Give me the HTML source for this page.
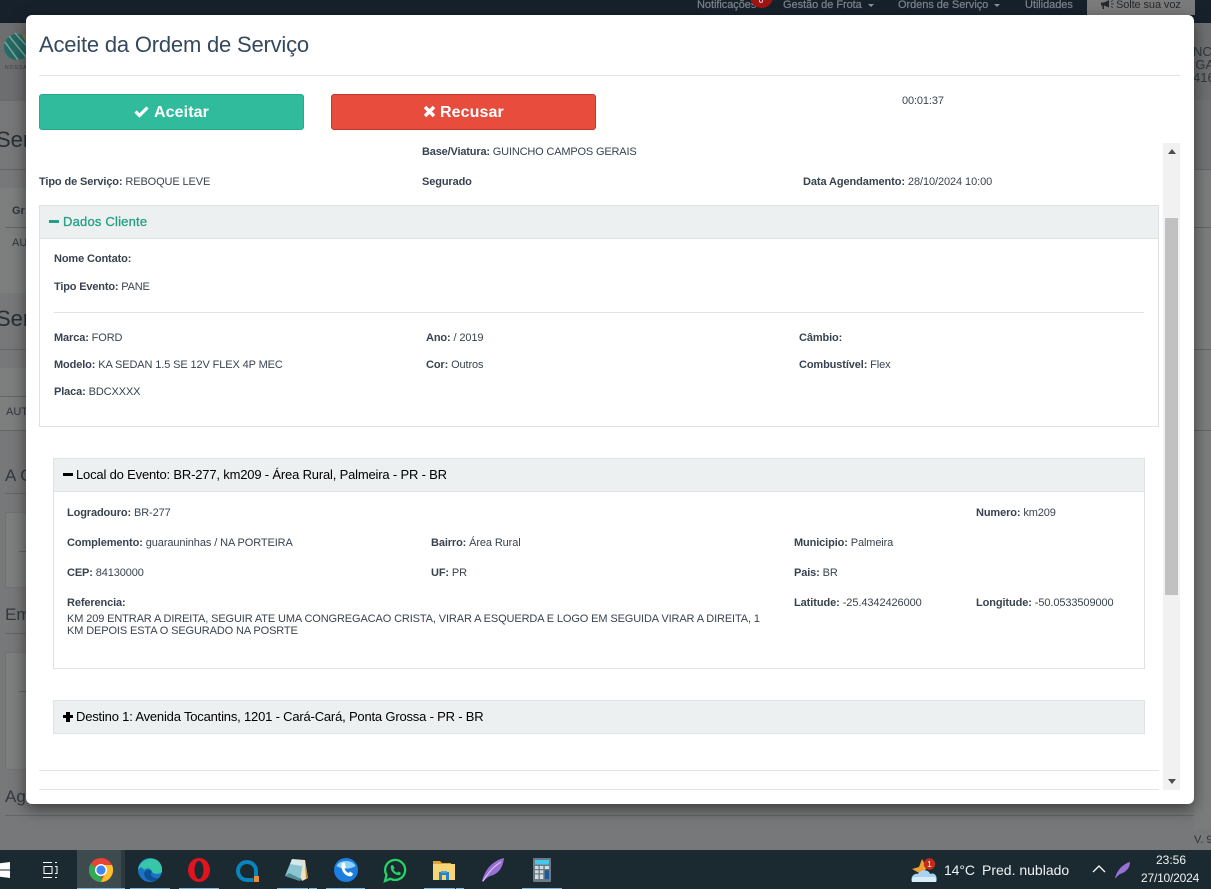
<!DOCTYPE html>
<html><head><meta charset="utf-8"><title>Aceite da Ordem de Serviço</title>
<style>
*{box-sizing:border-box}
html,body{margin:0;padding:0}
body{width:1211px;height:889px;position:relative;overflow:hidden;background:#777879;font-family:"Liberation Sans",sans-serif;font-size:11px;color:#2f3d4a}
.a{position:absolute;white-space:nowrap}
b{font-weight:700}
.t{font-size:11px;line-height:13px;color:#38434f;margin-top:1px;letter-spacing:-.12px}
.bg{color:#30363c}
.ln{position:absolute;background:#646566;height:1px}
.panel{position:absolute;border:1px solid #dfe3e4;background:#fff}
.ph{position:absolute;background:#ecf0f1;border:1px solid #dfe3e4;height:34px}
.hr{position:absolute;background:#e3e3e3;height:1px}
.ic{position:absolute}
.nav{color:#7e858c;font-size:11px;font-weight:400;top:-2px;line-height:14px;-webkit-text-stroke:.2px #7e858c;letter-spacing:-.05px}
.caret{display:inline-block;border-top:3px solid #8b9197;border-left:3px solid transparent;border-right:3px solid transparent;vertical-align:middle;margin-left:3px}
</style></head><body>

<!-- top bar -->
<div class="a" style="left:0;top:0;width:1211px;height:23px;background:#17212c"></div>
<div class="a nav" style="left:697px;">Notificações</div>
<div class="a" style="left:750px;top:-15px;width:23px;height:23px;border-radius:50%;background:#a01414"></div>
<div class="a" style="left:759px;top:0;width:4px;height:3px;border:1px solid #e9c9c9;border-top:0;border-radius:0 0 2px 2px"></div>
<div class="a nav" style="left:783px;">Gestão de Frota <span class="caret"></span></div>
<div class="a nav" style="left:898px">Ordens de Serviço <span class="caret"></span></div>
<div class="a nav" style="left:1025px;">Utilidades</div>
<div class="a" style="left:1087px;top:0;width:108px;height:15px;background:#7b7b7b"></div>
<svg class="ic" style="left:1101px;top:0" width="14" height="10" viewBox="0 0 14 10"><path d="M0 2.500H3L8 0V7.500L3 5.500V9H1.500V5.500H0Z" fill="#26292c"/><path d="M10 1.500L12 .5M10 4H13M10 6.500L12 7.500" stroke="#26292c" stroke-width=".8"/></svg>
<div class="a nav" style="left:1116px;color:#26292c;-webkit-text-stroke:0;letter-spacing:-.1px">Solte sua voz</div>

<!-- background page -->
<div class="a" style="left:0;top:23px;width:1211px;height:77px;background:#6d6e6f"></div>
<svg class="a" style="left:4px;top:31px" width="24" height="32" viewBox="0 0 24 32">
<circle cx="13" cy="16" r="13" fill="#236b63"/>
<path d="M1 11L14 29M5 5L22 26M11 2L27 20" stroke="#7fa39d" stroke-width="1.500" fill="none"/>
<path d="M19 4Q24 9 23 16" stroke="#8a7a3c" stroke-width="3" fill="none"/>
</svg>
<div class="a" style="left:5px;top:65px;font-size:5px;color:#3a3f44;letter-spacing:1px">NOSSA</div>
<div class="a bg" style="left:1193px;top:45px;font-size:13px;line-height:13px">NC</div>
<div class="a bg" style="left:1186px;top:58px;font-size:13px;line-height:13px">RGA</div>
<div class="a bg" style="left:1193px;top:71px;font-size:13px;line-height:13px">416</div>
<div class="ln" style="left:0;top:100px;width:1211px;background:#6b6c6d"></div>

<div class="a bg" style="left:-4px;top:127px;font-size:22px;line-height:26px;color:#282e34">Ser</div>
<div class="ln" style="left:0;top:169px;width:30px"></div>
<div class="a" style="left:0;top:188px;width:30px;height:105px;background:#7d7e7e"></div>
<div class="a bg" style="left:12px;top:205px;font-weight:700;font-size:11px">Gr</div>
<div class="ln" style="left:5px;top:227px;width:30px"></div>
<div class="a bg" style="left:12px;top:237px;font-size:11px">AU</div>
<div class="a bg" style="left:-4px;top:306px;font-size:22px;line-height:26px;color:#282e34">Ser</div>
<div class="ln" style="left:0;top:349px;width:30px"></div>
<div class="a" style="left:0;top:368px;width:30px;height:62px;background:#7d7e7e"></div>
<div class="ln" style="left:0;top:396px;width:30px"></div>
<div class="a bg" style="left:6px;top:406px;font-size:11px">AUT</div>
<div class="ln" style="left:0;top:430px;width:30px"></div>
<div class="a bg" style="left:5px;top:466px;font-size:17px;line-height:20px;color:#33393f">A C</div>
<div class="ln" style="left:5px;top:493px;width:30px"></div>
<div class="a" style="left:5px;top:512px;width:30px;height:76px;background:#7d7e7e;border:1px solid #717272"></div>
<div class="ln" style="left:19px;top:551px;width:15px"></div>
<div class="a bg" style="left:5px;top:605px;font-size:17px;line-height:20px;color:#33393f">Em</div>
<div class="ln" style="left:5px;top:633px;width:30px"></div>
<div class="a" style="left:5px;top:652px;width:30px;height:118px;background:#7d7e7e;border:1px solid #717272"></div>
<div class="ln" style="left:19px;top:691px;width:15px"></div>
<div class="a bg" style="left:5px;top:787px;font-size:17px;line-height:20px;color:#33393f">Ag</div>
<div class="ln" style="left:5px;top:815px;width:1206px"></div>
<div class="a" style="left:0;top:829px;width:1211px;height:21px;background:#76787a"></div>
<div class="a bg" style="left:1194px;top:834px;font-size:11px;color:#2f3336">V. 9</div>
<div class="a" style="left:1194px;top:100px;width:17px;height:715px;background:#7b7c7c"></div>
<div class="a" style="left:1194px;top:100px;width:17px;height:69px;background:#717273"></div>
<div class="ln" style="left:1194px;top:169px;width:17px"></div>
<div class="ln" style="left:1194px;top:227px;width:17px"></div>
<div class="ln" style="left:1194px;top:349px;width:17px"></div>
<div class="ln" style="left:1194px;top:430px;width:17px"></div>
<div class="a" style="left:1194px;top:815px;width:17px;height:14px;background:#7a7b7b"></div>

<!-- modal -->
<div class="a" style="left:26px;top:15px;width:1168px;height:789px;background:#fff;border-radius:6px;box-shadow:0 5px 15px rgba(0,0,0,.5)"></div>
<div class="a" style="left:39px;top:32px;font-size:22px;line-height:26px;color:#34495e;letter-spacing:-.2px">Aceite da Ordem de Serviço</div>
<div class="hr" style="left:39px;top:75px;width:1141px"></div>

<div class="a" style="left:39px;top:94px;width:265px;height:36px;background:#2fbb9c;border:1px solid #29a88c;border-radius:3px"></div>
<svg class="ic" style="left:134px;top:105px" width="15" height="13" viewBox="0 0 15 13"><path d="M1.500 6.500L5.500 10.500L13.500 2.500" stroke="#fff" stroke-width="3.200" fill="none"/></svg>
<div class="a" style="left:154px;top:103px;font-size:16px;line-height:19px;font-weight:700;color:#fff;letter-spacing:.1px">Aceitar</div>

<div class="a" style="left:331px;top:94px;width:265px;height:36px;background:#e74c3c;border:1px solid #c0392b;border-radius:3px"></div>
<svg class="ic" style="left:423px;top:105px" width="13" height="13" viewBox="0 0 13 13"><path d="M2 2L11 11M11 2L2 11" stroke="#fff" stroke-width="3.400" fill="none"/></svg>
<div class="a" style="left:440px;top:103px;font-size:16px;line-height:19px;font-weight:700;color:#fff;letter-spacing:.1px">Recusar</div>

<div class="a t" style="left:902px;top:94px">00:01:37</div>

<!-- scrollbar -->
<div class="a" style="left:1163px;top:143px;width:17px;height:647px;background:#f1f1f1"></div>
<div class="a" style="left:1165px;top:218px;width:13px;height:377px;background:#c1c1c1"></div>
<div class="a" style="left:1168px;top:149px;border-left:4px solid transparent;border-right:4px solid transparent;border-bottom:5px solid #505050"></div>
<div class="a" style="left:1168px;top:779px;border-left:4px solid transparent;border-right:4px solid transparent;border-top:5px solid #505050"></div>

<div class="a t" style="left:422px;top:145px;letter-spacing:-.17px"><b>Base/Viatura:</b> GUINCHO CAMPOS GERAIS</div>
<div class="a t" style="left:39px;top:175px"><b>Tipo de Serviço:</b> REBOQUE LEVE</div>
<div class="a t" style="left:422px;top:175px"><b>Segurado</b></div>
<div class="a t" style="left:803px;top:175px;letter-spacing:-.09px"><b>Data Agendamento:</b> 28/10/2024 10:00</div>

<!-- Dados Cliente -->
<div class="panel" style="left:39px;top:205px;width:1120px;height:222px"></div>
<div class="ph" style="left:39px;top:205px;width:1120px"></div>
<div class="a" style="left:49px;top:220px;width:10px;height:3px;background:#23a085"></div>
<div class="a" style="left:63px;top:213px;font-size:13px;line-height:17px;color:#23a085;-webkit-text-stroke:.3px #23a085;letter-spacing:.2px">Dados Cliente</div>
<div class="a t" style="left:54px;top:252px"><b>Nome Contato:</b></div>
<div class="a t" style="left:54px;top:280px;letter-spacing:-.17px"><b>Tipo Evento:</b> PANE</div>
<div class="hr" style="left:54px;top:312px;width:1090px"></div>
<div class="a t" style="left:54px;top:331px"><b>Marca:</b> FORD</div>
<div class="a t" style="left:426px;top:331px"><b>Ano:</b> / 2019</div>
<div class="a t" style="left:799px;top:331px"><b>Câmbio:</b></div>
<div class="a t" style="left:54px;top:358px;letter-spacing:-.12px"><b>Modelo:</b> KA SEDAN 1.5 SE 12V FLEX 4P MEC</div>
<div class="a t" style="left:426px;top:358px"><b>Cor:</b> Outros</div>
<div class="a t" style="left:799px;top:358px"><b>Combustível:</b> Flex</div>
<div class="a t" style="left:54px;top:385px"><b>Placa:</b> BDCXXXX</div>

<!-- Local do Evento -->
<div class="panel" style="left:53px;top:458px;width:1092px;height:211px"></div>
<div class="ph" style="left:53px;top:458px;width:1092px"></div>
<div class="a" style="left:63px;top:473px;width:10px;height:3px;background:#000"></div>
<div class="a" style="left:76px;top:466px;font-size:13px;line-height:17px;color:#000;letter-spacing:-.18px">Local do Evento: BR-277, km209 - Área Rural, Palmeira - PR - BR</div>
<div class="a t" style="left:67px;top:506px"><b>Logradouro:</b> BR-277</div>
<div class="a t" style="left:976px;top:506px"><b>Numero:</b> km209</div>
<div class="a t" style="left:67px;top:536px;letter-spacing:-.1px"><b>Complemento:</b> guarauninhas / NA PORTEIRA</div>
<div class="a t" style="left:431px;top:536px"><b>Bairro:</b> Área Rural</div>
<div class="a t" style="left:794px;top:536px"><b>Municipio:</b> Palmeira</div>
<div class="a t" style="left:67px;top:566px"><b>CEP:</b> 84130000</div>
<div class="a t" style="left:431px;top:566px"><b>UF:</b> PR</div>
<div class="a t" style="left:794px;top:566px"><b>Pais:</b> BR</div>
<div class="a t" style="left:67px;top:596px"><b>Referencia:</b></div>
<div class="a t" style="left:67px;top:612px;line-height:12px;letter-spacing:-.12px">KM 209 ENTRAR A DIREITA, SEGUIR ATE UMA CONGREGACAO CRISTA, VIRAR A ESQUERDA E LOGO EM SEGUIDA VIRAR A DIREITA, 1<br>KM DEPOIS ESTA O SEGURADO NA POSRTE</div>
<div class="a t" style="left:794px;top:596px;letter-spacing:-.08px"><b>Latitude:</b> -25.4342426000</div>
<div class="a t" style="left:976px;top:596px;letter-spacing:-.1px"><b>Longitude:</b> -50.0533509000</div>

<!-- Destino -->
<div class="ph" style="left:53px;top:700px;width:1092px"></div>
<div class="a" style="left:63px;top:715px;width:10px;height:3px;background:#000"></div>
<div class="a" style="left:66px;top:712px;width:4px;height:10px;background:#000"></div>
<div class="a" style="left:76px;top:708px;font-size:13px;line-height:17px;color:#000;letter-spacing:-.19px">Destino 1: Avenida Tocantins, 1201 - Cará-Cará, Ponta Grossa - PR - BR</div>

<div class="hr" style="left:39px;top:770px;width:1120px"></div>
<div class="hr" style="left:39px;top:789px;width:1120px"></div>

<!-- taskbar -->
<div class="a" style="left:0;top:850px;width:1211px;height:39px;background:#1a2a30"></div>
<svg class="ic" style="left:0;top:862px" width="10" height="16" viewBox="0 0 10 16"><path d="M0 1.200L10 0V7.500H0ZM0 8.500H10V16L0 14.800Z" fill="#fff"/></svg>
<svg class="ic" style="left:42px;top:862px" width="16" height="16" viewBox="0 0 16 16" fill="none" stroke="#fff" stroke-width="1"><path d="M1 .5H10M1 15.500H10M2 4.500H10V11.500H2ZM13 .5H15M13 4.500H15V11.500H13M13 15.500H15"/></svg>

<div class="a" style="left:77px;top:850px;width:44px;height:39px;background:#3d4a4e"></div>
<div class="a" style="left:121px;top:850px;width:4px;height:39px;background:#2c3a3f"></div>
<svg class="ic" style="left:89px;top:858px" width="24" height="24" viewBox="0 0 24 24">
<circle cx="12" cy="12" r="12" fill="#ea4335"/>
<path d="M12 12L1.500 6A12 12 0 0 0 12 24Z" fill="#34a853"/>
<path d="M12 7H23A12 12 0 0 1 12 24L17 13Z" fill="#fbc02d"/>
<circle cx="12" cy="12" r="6" fill="#fff"/><circle cx="12" cy="12" r="4.600" fill="#4285f4"/>
</svg>
<svg class="ic" style="left:138px;top:858px" width="24" height="24" viewBox="0 0 24 24">
<circle cx="12" cy="12" r="12" fill="#1a74c4"/>
<path d="M0 12C1 3 11-2 19 2C23 5 25 10 24 14C21 17 16 16 14 14C13 10 9 9 6 12C4 8 2 9 0 12Z" fill="#37c6a8"/>
<path d="M6 15C8 11 12 11 14 14C11 17 15 21 21 20C16 25 7 24 6 15Z" fill="#0f4f97"/>
</svg>
<svg class="ic" style="left:187px;top:858px" width="24" height="24" viewBox="0 0 24 24">
<ellipse cx="12" cy="12" rx="11" ry="12" fill="#e0131f"/><ellipse cx="12" cy="12" rx="4.500" ry="9" fill="#1a2a30"/>
</svg>
<svg class="ic" style="left:236px;top:858px" width="24" height="24" viewBox="0 0 24 24">
<path d="M17.500 22H11A9 9 0 1 1 20 13V18" fill="none" stroke="#0a84bd" stroke-width="4"/>
<rect x="18" y="18" width="5" height="6" fill="#ee8a2f"/>
</svg>
<svg class="ic" style="left:285px;top:858px" width="24" height="24" viewBox="0 0 24 24">
<path d="M7 1L20 2L23 20L17 23Z" fill="#e9e4c7"/><path d="M20 4L23 20L21 21Z" fill="#c68a2e"/>
<path d="M7 1L18 4L15 23L0 18Z" fill="#8cc5cf"/><path d="M7 1L18 4L17 8L5 6Z" fill="#d4e9ec"/><path d="M0 18L15 23L16 21L4 15Z" fill="#4e8f9c"/>
</svg>
<svg class="ic" style="left:334px;top:858px" width="24" height="24" viewBox="0 0 24 24">
<circle cx="12" cy="12" r="12" fill="#1b7fe0"/><path d="M2.500 8A10 7.500 0 0 1 21.500 8A12 7 0 0 1 2.500 8Z" fill="#8fd0f7"/>
<path d="M8 5L10.500 4.500L12 9L10.500 10.500C11 12.500 12.500 14 14.500 15L16 13.500L19 15.500L18 18C12 20 5.500 12 8 5Z" fill="#fff"/>
</svg>
<svg class="ic" style="left:383px;top:858px" width="24" height="25" viewBox="0 0 24 25">
<path d="M2 23L3.500 17A10 10 0 1 1 7.500 20.800Z" fill="none" stroke="#25d366" stroke-width="2.300"/>
<path d="M8 7.500L10 7L11.500 10L10.500 11.500C11 13 12.500 14 14 14.800L15.500 13.500L18 15L17 17C12 18 6.500 12.500 8 7.500Z" fill="#25d366"/>
</svg>
<svg class="ic" style="left:433px;top:861px" width="23" height="19" viewBox="0 0 23 19">
<path d="M0 0H7L9 2H18V5H0Z" fill="#e0a526"/><rect x="0" y="3" width="22" height="16" fill="#f7d775"/>
<path d="M6 19V11H16V19H13V14H9V19Z" fill="#2b7fc9"/><rect x="8" y="10" width="6" height="2" fill="#4fa3e0"/>
</svg>
<svg class="ic" style="left:481px;top:858px" width="24" height="25" viewBox="0 0 24 25">
<path d="M1 23C4 12 11 3 23 0C22 9 18 16 9 18C7 19 4 21 2 24Z" fill="#9a6fd6"/>
<path d="M2 23C7 15 13 8 20 4" stroke="#e5d7f7" stroke-width="1" fill="none"/>
</svg>
<svg class="ic" style="left:533px;top:858px" width="18" height="24" viewBox="0 0 18 24">
<rect x="0" y="0" width="18" height="24" rx="1" fill="#6c7a85"/>
<rect x="2" y="2" width="14" height="4.500" fill="#45c8ea"/>
<path d="M2 8H5.500V11H2ZM6.800 8H10.300V11H6.800ZM2 12.200H5.500V15.200H2ZM6.800 12.200H10.300V15.200H6.800ZM2 16.500H5.500V21H2ZM6.800 16.500H10.300V21H6.800ZM11.800 8H16V11H11.800Z" fill="#d7dde1"/>
<rect x="11.800" y="12.200" width="4.200" height="9" fill="#1d5a9c"/>
</svg>
<div class="a" style="left:77px;top:888px;width:48px;height:1px;background:#76b9ed"></div>
<div class="a" style="left:130px;top:888px;width:40px;height:1px;background:#76b9ed"></div>
<div class="a" style="left:179px;top:888px;width:40px;height:1px;background:#76b9ed"></div>
<div class="a" style="left:277px;top:888px;width:31px;height:1px;background:#76b9ed"></div>
<div class="a" style="left:309px;top:888px;width:8px;height:1px;background:#76b9ed"></div>
<div class="a" style="left:326px;top:888px;width:39px;height:1px;background:#76b9ed"></div>
<div class="a" style="left:424px;top:888px;width:31px;height:1px;background:#76b9ed"></div>
<div class="a" style="left:456px;top:888px;width:8px;height:1px;background:#76b9ed"></div>
<div class="a" style="left:522px;top:888px;width:40px;height:1px;background:#76b9ed"></div>

<svg class="ic" style="left:911px;top:856px" width="28" height="28" viewBox="0 0 28 28">
<path d="M1 13L8 11L11 3L16 12L10 18Z" fill="#f0a030"/>
<path d="M1 26C-1 20 4 17 7 18C9 13 18 13 19 18C24 16 27 21 25 26Z" fill="#a7d3f2"/>
<path d="M1 26C0 23 2 21 4 21H23C25 21 26 24 25 26Z" fill="#d9ecfa"/>
<circle cx="18.500" cy="8" r="5.700" fill="#c42b1c"/>
<text x="18.500" y="11" font-size="8" fill="#fff" text-anchor="middle" font-family="Liberation Sans">1</text>
</svg>
<div class="a" style="left:944px;top:862px;font-size:14px;line-height:16px;color:#f0f3f4;letter-spacing:-.1px">14°C</div>
<div class="a" style="left:982px;top:862px;font-size:14px;line-height:16px;color:#f0f3f4">Pred. nublado</div>
<svg class="ic" style="left:1092px;top:864px" width="14" height="10" viewBox="0 0 14 10"><path d="M1 8L7 2L13 8" stroke="#fff" stroke-width="1.300" fill="none"/></svg>
<svg class="ic" style="left:1115px;top:861px" width="16" height="18" viewBox="0 0 16 18"><path d="M0 17C2 9 8 3 15 1C15 6 12 11 5 13C4 14 2 15 1 17Z" fill="#9a6fd6"/></svg>
<div class="a" style="left:1156px;top:853px;font-size:12px;line-height:15px;color:#f0f3f4">23:56</div>
<div class="a" style="left:1141px;top:871px;font-size:12px;line-height:15px;color:#f0f3f4;letter-spacing:-.2px">27/10/2024</div>
</body></html>
